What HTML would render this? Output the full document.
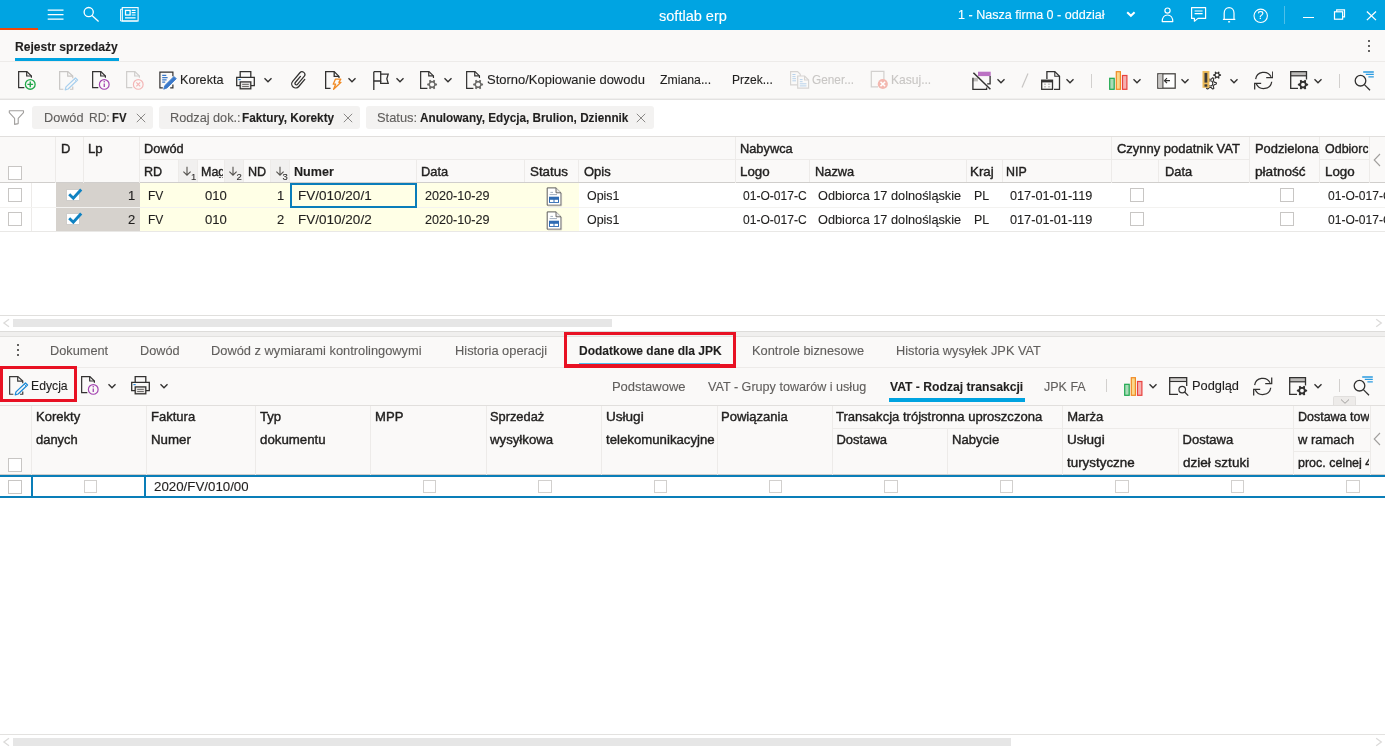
<!DOCTYPE html>
<html lang="pl"><head><meta charset="utf-8"><title>Rejestr sprzedaży - softlab erp</title>
<style>
html,body{margin:0;padding:0;}
body{width:1385px;height:750px;overflow:hidden;background:#fff;position:relative;font-family:"Liberation Sans",sans-serif;color:#201f1e;}
#app{position:absolute;left:0;top:0;width:1385px;height:750px;overflow:hidden;will-change:transform;}
#app>div,#app>svg,#app>span{position:absolute;display:block;}
#app>span{white-space:pre;line-height:1;transform-origin:0 0;-webkit-text-stroke:0.12px;}
.cb{box-sizing:border-box;border:1px solid #c8c6c4;background:#fff;}
</style></head><body><div id="app">
<div style="left:0px;top:0px;width:1385px;height:30px;background:#00a4e2;"></div>
<div style="left:0px;top:28px;width:38px;height:2px;background:#f0480a;"></div>
<span style="left:658.63px;top:8.75px;font-size:14px;color:#fff;transform:scaleX(1.0380);">softlab erp</span>
<span style="left:957.99px;top:7.90px;font-size:13px;color:#fff;transform:scaleX(0.9660);">1 - Nasza firma 0 - oddział</span>
<div style="left:0px;top:30px;width:1385px;height:31px;background:#faf9f8;"></div>
<div style="left:0px;top:61px;width:1385px;height:1px;background:#edebe9;"></div>
<span style="left:15.44px;top:40.64px;font-size:12px;font-weight:700;transform:scaleX(1.0072);">Rejestr sprzedaży</span>
<div style="left:15px;top:58px;width:104px;height:3px;background:#00a3e0;"></div>
<div style="left:1368px;top:40.3px;width:2px;height:2px;background:#323130;border-radius:1px;"></div>
<div style="left:1368px;top:45.2px;width:2px;height:2px;background:#323130;border-radius:1px;"></div>
<div style="left:1368px;top:50.0px;width:2px;height:2px;background:#323130;border-radius:1px;"></div>
<div style="left:0px;top:62px;width:1385px;height:36px;background:#faf9f8;"></div>
<div style="left:0px;top:98px;width:1385px;height:1px;background:#f0efee;"></div>
<div style="left:0px;top:99px;width:1385px;height:1px;background:#e3e2e1;"></div>
<span style="left:179.59px;top:72.80px;font-size:13px;transform:scaleX(0.9700);">Korekta</span>
<span style="left:486.99px;top:72.80px;font-size:13px;transform:scaleX(0.9974);">Storno/Kopiowanie dowodu</span>
<span style="left:659.58px;top:72.80px;font-size:13px;transform:scaleX(0.9443);">Zmiana...</span>
<span style="left:732.18px;top:72.80px;font-size:13px;transform:scaleX(0.9249);">Przek...</span>
<span style="left:811.78px;top:72.80px;font-size:13px;color:#c8c6c4;transform:scaleX(0.9096);">Gener...</span>
<span style="left:891.28px;top:72.80px;font-size:13px;color:#c8c6c4;transform:scaleX(0.9264);">Kasuj...</span>
<div style="left:0px;top:100px;width:1385px;height:36px;background:#fff;"></div>
<div style="left:32.2px;top:106px;width:121.3px;height:23px;background:#f3f2f1;border-radius:3px;"></div>
<div style="left:159.2px;top:106px;width:201px;height:23px;background:#f3f2f1;border-radius:3px;"></div>
<div style="left:366.2px;top:106px;width:288px;height:23px;background:#f3f2f1;border-radius:3px;"></div>
<span style="left:43.58px;top:110.80px;font-size:13px;color:#605e5c;transform:scaleX(0.9753);">Dowód</span>
<span style="left:88.98px;top:110.80px;font-size:13px;color:#605e5c;transform:scaleX(0.9232);">RD:</span>
<span style="left:112.28px;top:110.80px;font-size:13px;font-weight:700;transform:scaleX(0.8764);">FV</span>
<span style="left:169.88px;top:110.80px;font-size:13px;color:#605e5c;transform:scaleX(0.9765);">Rodzaj dok.:</span>
<span style="left:241.88px;top:110.80px;font-size:13px;font-weight:700;transform:scaleX(0.9068);">Faktury, Korekty</span>
<span style="left:376.59px;top:110.80px;font-size:13px;color:#605e5c;transform:scaleX(0.9901);">Status:</span>
<span style="left:419.59px;top:110.80px;font-size:13px;font-weight:700;transform:scaleX(0.9024);">Anulowany, Edycja, Brulion, Dziennik</span>
<svg style="left:135.2px;top:111.6px;" width="12" height="12" viewBox="0 0 12 12" fill="none"><path d="M1.7999999999999998 1.7999999999999998L10.2 10.2M10.2 1.7999999999999998L1.7999999999999998 10.2" stroke="#8a8886" stroke-width="1"/></svg>
<svg style="left:341.7px;top:111.6px;" width="12" height="12" viewBox="0 0 12 12" fill="none"><path d="M1.7999999999999998 1.7999999999999998L10.2 10.2M10.2 1.7999999999999998L1.7999999999999998 10.2" stroke="#8a8886" stroke-width="1"/></svg>
<svg style="left:635.4px;top:111.6px;" width="12" height="12" viewBox="0 0 12 12" fill="none"><path d="M1.7999999999999998 1.7999999999999998L10.2 10.2M10.2 1.7999999999999998L1.7999999999999998 10.2" stroke="#8a8886" stroke-width="1"/></svg>
<div style="left:0px;top:136px;width:1385px;height:1px;background:#e1dfdd;"></div>
<div style="left:0px;top:137px;width:1370px;height:46px;background:#faf9f8;"></div>
<div style="left:1370px;top:137px;width:15px;height:46px;background:#faf9f8;"></div>
<div style="left:178px;top:159.8px;width:19.2px;height:22.4px;background:#f1f0ef;"></div>
<div style="left:224.3px;top:159.8px;width:19.4px;height:22.4px;background:#f1f0ef;"></div>
<div style="left:270.4px;top:159.8px;width:18.8px;height:22.4px;background:#f1f0ef;"></div>
<div style="left:140px;top:158.8px;width:1110px;height:1px;background:#edebe9;"></div>
<div style="left:1320px;top:158.8px;width:50px;height:1px;background:#edebe9;"></div>
<div style="left:0px;top:182px;width:1385px;height:1.3px;background:#d0cecc;"></div>
<div style="left:55.3px;top:137px;width:1px;height:46px;background:#edebe9;"></div>
<div style="left:83.3px;top:137px;width:1px;height:46px;background:#edebe9;"></div>
<div style="left:139.3px;top:137px;width:1px;height:46px;background:#edebe9;"></div>
<div style="left:734.5px;top:137px;width:1px;height:46px;background:#edebe9;"></div>
<div style="left:1111.3px;top:137px;width:1px;height:46px;background:#edebe9;"></div>
<div style="left:1249.3px;top:137px;width:1px;height:46px;background:#edebe9;"></div>
<div style="left:1319px;top:137px;width:1px;height:46px;background:#edebe9;"></div>
<div style="left:1369.3px;top:137px;width:1px;height:46px;background:#edebe9;"></div>
<div style="left:177.7px;top:159.5px;width:1px;height:22.6px;background:#edebe9;"></div>
<div style="left:196.9px;top:159.5px;width:1px;height:22.6px;background:#edebe9;"></div>
<div style="left:224px;top:159.5px;width:1px;height:22.6px;background:#edebe9;"></div>
<div style="left:243.4px;top:159.5px;width:1px;height:22.6px;background:#edebe9;"></div>
<div style="left:270.1px;top:159.5px;width:1px;height:22.6px;background:#edebe9;"></div>
<div style="left:288.9px;top:159.5px;width:1px;height:22.6px;background:#edebe9;"></div>
<div style="left:415.8px;top:159.5px;width:1px;height:22.6px;background:#edebe9;"></div>
<div style="left:524.2px;top:159.5px;width:1px;height:22.6px;background:#edebe9;"></div>
<div style="left:578.3px;top:159.5px;width:1px;height:22.6px;background:#edebe9;"></div>
<div style="left:809.3px;top:159.5px;width:1px;height:22.6px;background:#edebe9;"></div>
<div style="left:966.3px;top:159.5px;width:1px;height:22.6px;background:#edebe9;"></div>
<div style="left:1002.2px;top:159.5px;width:1px;height:22.6px;background:#edebe9;"></div>
<div style="left:1157.5px;top:159.5px;width:1px;height:22.6px;background:#edebe9;"></div>
<div style="left:0px;top:183.3px;width:1385px;height:23.3px;background:#fff;"></div>
<div style="left:56px;top:183.3px;width:84px;height:23.3px;background:#d6d2cd;"></div>
<div style="left:140px;top:183.3px;width:438.9px;height:23.3px;background:#ffffe6;"></div>
<div style="left:30.5px;top:183.3px;width:1px;height:23.3px;background:#edebe9;"></div>
<div style="left:0px;top:208.0px;width:1385px;height:23.1px;background:#fff;"></div>
<div style="left:56px;top:208.0px;width:84px;height:23.1px;background:#d6d2cd;"></div>
<div style="left:140px;top:208.0px;width:438.9px;height:23.1px;background:#ffffe6;"></div>
<div style="left:30.5px;top:208.0px;width:1px;height:23.1px;background:#edebe9;"></div>
<div style="left:0px;top:206.6px;width:1385px;height:1.4px;background:#f3f2f0;"></div>
<div style="left:0px;top:231.1px;width:1385px;height:1.2px;background:#e9e8e6;"></div>
<div class="cb" style="left:8px;top:188px;width:14px;height:14px;"></div>
<div class="cb" style="left:66.3px;top:188.8px;width:13.4px;height:12.6px;border-color:#cfcdca;"></div>
<svg style="left:66px;top:186px;" width="18" height="18" viewBox="0 0 18 18" fill="none"><path d="M3.2 8.3L7.3 12.2L15.2 3.5" stroke="#0f82c2" stroke-width="2.9"/></svg>
<span style="left:128.09px;top:188.80px;font-size:13px;">1</span>
<span style="left:147.59px;top:188.80px;font-size:13px;transform:scaleX(0.9245);">FV</span>
<span style="left:204.88px;top:188.80px;font-size:13px;transform:scaleX(1.0077);">010</span>
<span style="left:276.89px;top:188.80px;font-size:13px;">1</span>
<span style="left:297.89px;top:188.80px;font-size:13px;transform:scaleX(1.0401);">FV/010/20/1</span>
<span style="left:424.79px;top:188.80px;font-size:13px;transform:scaleX(0.9710);">2020-10-29</span>
<span style="left:586.99px;top:188.80px;font-size:13px;transform:scaleX(0.9559);">Opis1</span>
<span style="left:743.08px;top:188.80px;font-size:13px;transform:scaleX(0.9276);">01-O-017-C</span>
<span style="left:817.88px;top:188.80px;font-size:13px;transform:scaleX(0.9807);">Odbiorca 17 dolnośląskie</span>
<span style="left:973.68px;top:188.80px;font-size:13px;transform:scaleX(0.9537);">PL</span>
<span style="left:1010.49px;top:188.80px;font-size:13px;transform:scaleX(0.9768);">017-01-01-119</span>
<div class="cb" style="left:1130px;top:188px;width:14px;height:14px;"></div>
<div class="cb" style="left:1280px;top:188px;width:14px;height:14px;"></div>
<span style="left:1328.09px;top:188.80px;font-size:13px;transform:scaleX(0.9276);">01-O-017-C</span>
<div class="cb" style="left:8px;top:212px;width:14px;height:14px;"></div>
<div class="cb" style="left:66.3px;top:212.8px;width:13.4px;height:12.6px;border-color:#cfcdca;"></div>
<svg style="left:66px;top:210px;" width="18" height="18" viewBox="0 0 18 18" fill="none"><path d="M3.2 8.3L7.3 12.2L15.2 3.5" stroke="#0f82c2" stroke-width="2.9"/></svg>
<span style="left:128.09px;top:212.80px;font-size:13px;">2</span>
<span style="left:147.59px;top:212.80px;font-size:13px;transform:scaleX(0.9245);">FV</span>
<span style="left:204.88px;top:212.80px;font-size:13px;transform:scaleX(1.0077);">010</span>
<span style="left:276.89px;top:212.80px;font-size:13px;">2</span>
<span style="left:297.89px;top:212.80px;font-size:13px;transform:scaleX(1.0401);">FV/010/20/2</span>
<span style="left:424.79px;top:212.80px;font-size:13px;transform:scaleX(0.9710);">2020-10-29</span>
<span style="left:586.99px;top:212.80px;font-size:13px;transform:scaleX(0.9559);">Opis1</span>
<span style="left:743.08px;top:212.80px;font-size:13px;transform:scaleX(0.9276);">01-O-017-C</span>
<span style="left:817.88px;top:212.80px;font-size:13px;transform:scaleX(0.9807);">Odbiorca 17 dolnośląskie</span>
<span style="left:973.68px;top:212.80px;font-size:13px;transform:scaleX(0.9537);">PL</span>
<span style="left:1010.49px;top:212.80px;font-size:13px;transform:scaleX(0.9768);">017-01-01-119</span>
<div class="cb" style="left:1130px;top:212px;width:14px;height:14px;"></div>
<div class="cb" style="left:1280px;top:212px;width:14px;height:14px;"></div>
<span style="left:1328.09px;top:212.80px;font-size:13px;transform:scaleX(0.9276);">01-O-017-C</span>
<div style="left:290px;top:183.4px;width:126.8px;height:2px;background:#0a7dba;"></div>
<div style="left:290px;top:205.6px;width:126.8px;height:2px;background:#0a7dba;"></div>
<div style="left:290px;top:183.4px;width:2px;height:24.2px;background:#0a7dba;"></div>
<div style="left:414.8px;top:183.4px;width:2px;height:24.2px;background:#0a7dba;"></div>
<div class="cb" style="left:8px;top:166px;width:14px;height:14px;"></div>
<span style="left:61.08px;top:141.60px;font-size:13px;-webkit-text-stroke:0.4px;transform:scaleX(0.9978);">D</span>
<span style="left:88.48px;top:141.60px;font-size:13px;-webkit-text-stroke:0.4px;transform:scaleX(1.0139);">Lp</span>
<span style="left:144.48px;top:141.60px;font-size:13px;-webkit-text-stroke:0.4px;transform:scaleX(0.9803);">Dowód</span>
<span style="left:740.28px;top:141.60px;font-size:13px;-webkit-text-stroke:0.4px;transform:scaleX(0.9851);">Nabywca</span>
<span style="left:1116.88px;top:141.60px;font-size:13px;-webkit-text-stroke:0.4px;">Czynny podatnik VAT</span>
<span style="left:1255.49px;top:141.60px;font-size:13px;-webkit-text-stroke:0.4px;transform:scaleX(0.9913);">Podzielona</span>
<span style="left:1324.59px;top:141.60px;font-size:13px;-webkit-text-stroke:0.4px;transform:scaleX(0.9600);width:45.42px;overflow:hidden;">Odbiorca</span>
<span style="left:144.48px;top:164.80px;font-size:13px;-webkit-text-stroke:0.4px;transform:scaleX(0.9675);">RD</span>
<span style="left:201.48px;top:164.80px;font-size:13px;-webkit-text-stroke:0.4px;transform:scaleX(0.9600);width:22.81px;overflow:hidden;">Mag</span>
<span style="left:247.98px;top:164.80px;font-size:13px;-webkit-text-stroke:0.4px;transform:scaleX(0.9675);">ND</span>
<span style="left:293.89px;top:164.80px;font-size:13px;font-weight:700;transform:scaleX(0.9680);">Numer</span>
<span style="left:421.29px;top:164.80px;font-size:13px;-webkit-text-stroke:0.4px;transform:scaleX(0.9891);">Data</span>
<span style="left:529.88px;top:164.80px;font-size:13px;-webkit-text-stroke:0.4px;transform:scaleX(1.0274);">Status</span>
<span style="left:583.58px;top:164.80px;font-size:13px;-webkit-text-stroke:0.4px;transform:scaleX(0.9976);">Opis</span>
<span style="left:740.28px;top:164.80px;font-size:13px;-webkit-text-stroke:0.4px;transform:scaleX(1.0259);">Logo</span>
<span style="left:814.99px;top:164.80px;font-size:13px;-webkit-text-stroke:0.4px;transform:scaleX(0.9854);">Nazwa</span>
<span style="left:970.28px;top:164.80px;font-size:13px;-webkit-text-stroke:0.4px;transform:scaleX(1.0236);">Kraj</span>
<span style="left:1006.28px;top:164.80px;font-size:13px;-webkit-text-stroke:0.4px;transform:scaleX(0.9538);">NIP</span>
<span style="left:1164.69px;top:164.80px;font-size:13px;-webkit-text-stroke:0.4px;transform:scaleX(0.9891);">Data</span>
<span style="left:1255.49px;top:164.80px;font-size:13px;-webkit-text-stroke:0.4px;transform:scaleX(1.0464);">płatność</span>
<span style="left:1324.59px;top:164.80px;font-size:13px;-webkit-text-stroke:0.4px;transform:scaleX(1.0259);">Logo</span>
<div style="left:0px;top:315px;width:1385px;height:1px;background:#e0dfdd;"></div>
<div style="left:13px;top:319.3px;width:598.7px;height:8px;background:#e6e6e6;"></div>
<div style="left:0px;top:331px;width:1385px;height:5.5px;background:#f0efee;"></div>
<div style="left:0px;top:331px;width:1385px;height:1px;background:#dddcda;"></div>
<div style="left:0px;top:336px;width:1385px;height:1px;background:#e2e1df;"></div>
<div style="left:0px;top:337px;width:1385px;height:30px;background:#faf9f8;"></div>
<div style="left:0px;top:367px;width:1385px;height:1px;background:#edebe9;"></div>
<div style="left:16.5px;top:344px;width:2px;height:2px;background:#323130;border-radius:1px;"></div>
<div style="left:16.5px;top:348.8px;width:2px;height:2px;background:#323130;border-radius:1px;"></div>
<div style="left:16.5px;top:353.6px;width:2px;height:2px;background:#323130;border-radius:1px;"></div>
<span style="left:50.18px;top:344.40px;font-size:13px;color:#605e5c;transform:scaleX(0.9818);">Dokument</span>
<span style="left:140.09px;top:344.40px;font-size:13px;color:#605e5c;transform:scaleX(0.9778);">Dowód</span>
<span style="left:211.38px;top:344.40px;font-size:13px;color:#605e5c;transform:scaleX(0.9880);">Dowód z wymiarami kontrolingowymi</span>
<span style="left:454.79px;top:344.40px;font-size:13px;color:#605e5c;transform:scaleX(0.9878);">Historia operacji</span>
<span style="left:578.58px;top:344.40px;font-size:13px;font-weight:700;transform:scaleX(0.9229);">Dodatkowe dane dla JPK</span>
<span style="left:751.68px;top:344.40px;font-size:13px;color:#605e5c;transform:scaleX(0.9877);">Kontrole biznesowe</span>
<span style="left:896.38px;top:344.40px;font-size:13px;color:#605e5c;transform:scaleX(0.9814);">Historia wysyłek JPK VAT</span>
<div style="left:579px;top:363px;width:141px;height:2px;background:#4fc0ee;"></div>
<div style="left:563.9px;top:332.1px;width:172.5px;height:3.4px;background:#e81123;"></div>
<div style="left:563.9px;top:364.40000000000003px;width:172.5px;height:3.4px;background:#e81123;"></div>
<div style="left:563.9px;top:332.1px;width:3.4px;height:35.7px;background:#e81123;"></div>
<div style="left:733.0px;top:332.1px;width:3.4px;height:35.7px;background:#e81123;"></div>
<div style="left:0px;top:368px;width:1385px;height:37px;background:#faf9f8;"></div>
<span style="left:30.98px;top:378.80px;font-size:13px;transform:scaleX(0.9395);">Edycja</span>
<div style="left:-0.4px;top:365.8px;width:77.4px;height:3.3px;background:#e81123;"></div>
<div style="left:-0.4px;top:398.8px;width:77.4px;height:3.3px;background:#e81123;"></div>
<div style="left:-0.4px;top:365.8px;width:3.3px;height:36.3px;background:#e81123;"></div>
<div style="left:73.7px;top:365.8px;width:3.3px;height:36.3px;background:#e81123;"></div>
<span style="left:611.88px;top:380.40px;font-size:13px;color:#605e5c;">Podstawowe</span>
<span style="left:708.28px;top:380.40px;font-size:13px;color:#605e5c;transform:scaleX(0.9687);">VAT - Grupy towarów i usług</span>
<span style="left:890.28px;top:380.40px;font-size:13px;font-weight:700;transform:scaleX(0.9341);">VAT - Rodzaj transakcji</span>
<div style="left:889.2px;top:398px;width:135.8px;height:3.5px;background:#00a3e0;"></div>
<span style="left:1044.29px;top:380.40px;font-size:13px;color:#605e5c;transform:scaleX(0.9610);">JPK FA</span>
<span style="left:1191.79px;top:379.30px;font-size:13px;transform:scaleX(0.9843);">Podgląd</span>
<div style="left:1106px;top:379.4px;width:1px;height:13px;background:#d2d0ce;"></div>
<div style="left:1339px;top:379.4px;width:1px;height:13px;background:#d2d0ce;"></div>
<div style="left:0px;top:405px;width:1385px;height:1px;background:#e1dfdd;"></div>
<div style="left:0px;top:406px;width:1385px;height:68.5px;background:#faf9f8;"></div>
<div style="left:0px;top:474px;width:1385px;height:1px;background:#d0cecc;"></div>
<div style="left:31px;top:406px;width:1px;height:68.5px;background:#edebe9;"></div>
<div style="left:146px;top:406px;width:1px;height:68.5px;background:#edebe9;"></div>
<div style="left:255px;top:406px;width:1px;height:68.5px;background:#edebe9;"></div>
<div style="left:370px;top:406px;width:1px;height:68.5px;background:#edebe9;"></div>
<div style="left:486px;top:406px;width:1px;height:68.5px;background:#edebe9;"></div>
<div style="left:601px;top:406px;width:1px;height:68.5px;background:#edebe9;"></div>
<div style="left:717px;top:406px;width:1px;height:68.5px;background:#edebe9;"></div>
<div style="left:832px;top:406px;width:1px;height:68.5px;background:#edebe9;"></div>
<div style="left:947px;top:428px;width:1px;height:46px;background:#edebe9;"></div>
<div style="left:1062px;top:406px;width:1px;height:68.5px;background:#edebe9;"></div>
<div style="left:1178px;top:428px;width:1px;height:46px;background:#edebe9;"></div>
<div style="left:1293px;top:406px;width:1px;height:68.5px;background:#edebe9;"></div>
<div style="left:1370px;top:406px;width:1px;height:68.5px;background:#edebe9;"></div>
<div style="left:832px;top:428px;width:230px;height:1px;background:#edebe9;"></div>
<div style="left:1062px;top:428px;width:308px;height:1px;background:#edebe9;"></div>
<div style="left:1293px;top:451px;width:77px;height:1px;background:#edebe9;"></div>
<span style="left:35.58px;top:410.00px;font-size:13px;-webkit-text-stroke:0.4px;transform:scaleX(1.0021);">Korekty</span>
<span style="left:35.58px;top:433.20px;font-size:13px;-webkit-text-stroke:0.4px;transform:scaleX(0.9964);">danych</span>
<span style="left:150.98px;top:410.00px;font-size:13px;-webkit-text-stroke:0.4px;transform:scaleX(1.0021);">Faktura</span>
<span style="left:150.98px;top:433.20px;font-size:13px;-webkit-text-stroke:0.4px;transform:scaleX(1.0219);">Numer</span>
<span style="left:259.59px;top:410.00px;font-size:13px;-webkit-text-stroke:0.4px;transform:scaleX(1.0096);">Typ</span>
<span style="left:259.59px;top:433.20px;font-size:13px;-webkit-text-stroke:0.4px;transform:scaleX(1.0209);">dokumentu</span>
<span style="left:374.99px;top:410.00px;font-size:13px;-webkit-text-stroke:0.4px;transform:scaleX(1.0070);">MPP</span>
<span style="left:490.19px;top:410.00px;font-size:13px;-webkit-text-stroke:0.4px;transform:scaleX(0.9863);">Sprzedaż</span>
<span style="left:490.19px;top:433.20px;font-size:13px;-webkit-text-stroke:0.4px;transform:scaleX(1.0168);">wysyłkowa</span>
<span style="left:605.58px;top:410.00px;font-size:13px;-webkit-text-stroke:0.4px;transform:scaleX(1.0428);">Usługi</span>
<span style="left:605.58px;top:433.20px;font-size:13px;-webkit-text-stroke:0.4px;transform:scaleX(1.0161);">telekomunikacyjne</span>
<span style="left:720.99px;top:410.00px;font-size:13px;-webkit-text-stroke:0.4px;transform:scaleX(1.0026);">Powiązania</span>
<span style="left:836.49px;top:410.00px;font-size:13px;-webkit-text-stroke:0.4px;transform:scaleX(1.0035);">Transakcja trójstronna uproszczona</span>
<span style="left:836.49px;top:433.20px;font-size:13px;-webkit-text-stroke:0.4px;">Dostawa</span>
<span style="left:951.78px;top:433.20px;font-size:13px;-webkit-text-stroke:0.4px;transform:scaleX(1.0043);">Nabycie</span>
<span style="left:1067.19px;top:410.00px;font-size:13px;-webkit-text-stroke:0.4px;">Marża</span>
<span style="left:1067.19px;top:433.20px;font-size:13px;-webkit-text-stroke:0.4px;transform:scaleX(1.0428);">Usługi</span>
<span style="left:1067.19px;top:456.00px;font-size:13px;-webkit-text-stroke:0.4px;transform:scaleX(1.0292);">turystyczne</span>
<span style="left:1182.59px;top:433.20px;font-size:13px;-webkit-text-stroke:0.4px;">Dostawa</span>
<span style="left:1182.59px;top:456.00px;font-size:13px;-webkit-text-stroke:0.4px;transform:scaleX(1.0408);">dzieł sztuki</span>
<span style="left:1297.99px;top:410.00px;font-size:13px;-webkit-text-stroke:0.4px;transform:scaleX(0.9600);width:73.96px;overflow:hidden;">Dostawa towarów</span>
<span style="left:1297.99px;top:433.20px;font-size:13px;-webkit-text-stroke:0.4px;transform:scaleX(0.9966);">w ramach</span>
<span style="left:1297.99px;top:456.00px;font-size:13px;-webkit-text-stroke:0.4px;transform:scaleX(0.9600);width:73.96px;overflow:hidden;">proc. celnej 42</span>
<div class="cb" style="left:8px;top:458px;width:14px;height:14px;"></div>
<div style="left:0px;top:477px;width:1385px;height:19px;background:#fff;"></div>
<div style="left:0px;top:475px;width:1385px;height:2.4px;background:#0a7eb8;"></div>
<div style="left:0px;top:495.8px;width:1385px;height:2.4px;background:#0a7eb8;"></div>
<div style="left:31.2px;top:475px;width:2.1px;height:23px;background:#0a7eb8;"></div>
<div style="left:144.2px;top:475px;width:2.1px;height:23px;background:#0a7eb8;"></div>
<div class="cb" style="left:8px;top:479.7px;width:14px;height:14px;"></div>
<div class="cb" style="left:83.6px;top:480px;width:13.4px;height:13.3px;border-color:#d2d0ce;"></div>
<div class="cb" style="left:422.9px;top:480px;width:13.4px;height:13.3px;border-color:#d2d0ce;"></div>
<div class="cb" style="left:538.3px;top:480px;width:13.4px;height:13.3px;border-color:#d2d0ce;"></div>
<div class="cb" style="left:653.6px;top:480px;width:13.4px;height:13.3px;border-color:#d2d0ce;"></div>
<div class="cb" style="left:768.9px;top:480px;width:13.4px;height:13.3px;border-color:#d2d0ce;"></div>
<div class="cb" style="left:884.3px;top:480px;width:13.4px;height:13.3px;border-color:#d2d0ce;"></div>
<div class="cb" style="left:999.7px;top:480px;width:13.4px;height:13.3px;border-color:#d2d0ce;"></div>
<div class="cb" style="left:1115.3px;top:480px;width:13.4px;height:13.3px;border-color:#d2d0ce;"></div>
<div class="cb" style="left:1230.8px;top:480px;width:13.4px;height:13.3px;border-color:#d2d0ce;"></div>
<div class="cb" style="left:1346.3px;top:480px;width:13.4px;height:13.3px;border-color:#d2d0ce;"></div>
<span style="left:154.38px;top:480.30px;font-size:13px;transform:scaleX(1.0232);width:92.16px;overflow:hidden;">2020/FV/010/0001</span>
<div style="left:0px;top:734px;width:1385px;height:1px;background:#e3e2e0;"></div>
<div style="left:13px;top:738.2px;width:998px;height:8px;background:#e6e6e6;"></div>
<svg style="left:18.0px;top:70.8px;" width="20" height="20" viewBox="0 0 20 20" fill="none"><path d="M6.3 16.6H0.65V0.65H8.9L13.4 5.0V6.7" stroke="#323130" stroke-width="1.2" stroke-linejoin="miter"/><path d="M8.7 0.65V5.0H13.4" stroke="#323130" stroke-width="1.2"/><circle cx="12.26" cy="13.4" r="4.85" stroke="#21a84a" stroke-width="1.3" fill="#faf9f8"/><path d="M9.4 13.4H15.1M12.26 10.55V16.25" stroke="#21a84a" stroke-width="1.4"/></svg>
<svg style="left:59.25px;top:70.9px;" width="22" height="22" viewBox="0 0 22 22" fill="none"><path d="M4.35 18.25H0.65V0.65H8.9L13.75 5.1V7.3" stroke="#c8c6c4" stroke-width="1.2"/><path d="M8.7 0.65V5.1H13.75" stroke="#c8c6c4" stroke-width="1.2"/><path d="M13.75 15.6V18.25H11.0" stroke="#c8c6c4" stroke-width="1.2"/><path d="M16.44 6.94L18.56 9.06L9.1 18.02L6.2 18.8L6.98 15.9Z" stroke="#a9d0ee" stroke-width="1.25" fill="#faf9f8" stroke-linejoin="round"/><path d="M15.2 8.2L17.3 10.3" stroke="#a9d0ee" stroke-width="0.9"/></svg>
<svg style="left:92.0px;top:70.8px;" width="20" height="20" viewBox="0 0 20 20" fill="none"><path d="M6.3 16.6H0.65V0.65H8.9L13.4 5.0V6.7" stroke="#323130" stroke-width="1.2" stroke-linejoin="miter"/><path d="M8.7 0.65V5.0H13.4" stroke="#323130" stroke-width="1.2"/><circle cx="12.26" cy="13.4" r="4.85" stroke="#a343b0" stroke-width="1.2" fill="#faf9f8"/><path d="M12.26 12.5V16.1" stroke="#a343b0" stroke-width="1.3"/><circle cx="12.26" cy="10.7" r="0.8" fill="#a343b0"/></svg>
<svg style="left:125.6px;top:70.8px;" width="20" height="20" viewBox="0 0 20 20" fill="none"><path d="M6.3 16.6H0.65V0.65H8.9L13.4 5.0V6.7" stroke="#cfcdcb" stroke-width="1.2" stroke-linejoin="miter"/><path d="M8.7 0.65V5.0H13.4" stroke="#cfcdcb" stroke-width="1.2"/><circle cx="12.26" cy="13.4" r="4.85" stroke="#f4b6b6" stroke-width="1.2" fill="#faf9f8"/><path d="M10.3 11.4L14.2 15.3M14.2 11.4L10.3 15.3" stroke="#f4b6b6" stroke-width="1.2"/></svg>
<svg style="left:158.5px;top:71.0px;" width="20" height="20" viewBox="0 0 20 20" fill="none"><path d="M3.8 16.9H0.9V1.1H13.9V5.2" stroke="#323130" stroke-width="1.2"/><path d="M13.9 13.5V16.9H11.2" stroke="#323130" stroke-width="1.2"/><path d="M3.2 4.3H7.3M3.2 6.6H8.6M3.2 8.9H7.6M3.2 11.2H6.2" stroke="#3a78c9" stroke-width="1.2"/><path d="M15 5.4L17.3 7.7L8 17L4.7 18.2L5.7 14.7Z" fill="#3a78c9" stroke="#3a78c9" stroke-width="0.8" stroke-linejoin="round"/></svg>
<svg style="left:235.5px;top:71.0px;" width="20" height="20" viewBox="0 0 20 20" fill="none"><path d="M4.2 6.3V0.7H14.8V6.3" stroke="#323130" stroke-width="1.3"/><path d="M4.2 14.7H0.7V6.3H18.3V14.7H14.8" stroke="#323130" stroke-width="1.3"/><rect x="4.2" y="10.9" width="10.6" height="6.9" fill="#e6e4e2" stroke="#323130" stroke-width="1.3"/><path d="M6.2 13.4H12.8M6.2 15.5H12.8" stroke="#605e5c" stroke-width="0.9"/><rect x="2.4" y="8" width="2.3" height="1.2" fill="#2b88d8"/></svg>
<svg style="left:262.1px;top:75.0px;" width="12" height="10" viewBox="0 0 12 10" fill="none"><path d="M2.5 3.25L6 6.75L9.5 3.25" stroke="#323130" stroke-width="1.35" stroke-linejoin="miter"/></svg>
<svg style="left:288.5px;top:70px;" width="20" height="20" viewBox="0 0 20 20" fill="none"><g transform="translate(10 10) rotate(40) scale(0.93)"><path d="M4.3 -4.5V5.5A4.3 4.3 0 0 1 -4.3 5.5V-6.6A3 3 0 0 1 1.7 -6.6V4.6A1.5 1.5 0 0 1 -1.3 4.6V-4" stroke="#323130" stroke-width="1.35" stroke-linecap="round"/></g></svg>
<svg style="left:324.6px;top:70.8px;" width="20" height="20" viewBox="0 0 20 20" fill="none"><path d="M5.5 17.35H0.65V0.65H9.2L14 5.4V7" stroke="#323130" stroke-width="1.3"/><path d="M9.2 0.65V5.4H14" stroke="#323130" stroke-width="1.3"/><path d="M10.4 8.2H15.8L13.8 11.3H16L8.6 18.2L10.6 13.2H8.2Z" stroke="#f08a24" stroke-width="1.3" stroke-linejoin="round" fill="#faf9f8"/></svg>
<svg style="left:345.8px;top:75.0px;" width="12" height="10" viewBox="0 0 12 10" fill="none"><path d="M2.5 3.25L6 6.75L9.5 3.25" stroke="#323130" stroke-width="1.35" stroke-linejoin="miter"/></svg>
<svg style="left:372.5px;top:70.8px;" width="20" height="20" viewBox="0 0 20 20" fill="none"><path d="M0.8 0.65V18.9" stroke="#323130" stroke-width="1.3"/><path d="M0.8 0.65H7.7V10.0H0.8" stroke="#323130" stroke-width="1.3"/><path d="M7.7 3.1H15.2L13.8 7.75L15.2 12.4H7.7V10.0" stroke="#323130" stroke-width="1.3" stroke-linejoin="miter"/></svg>
<svg style="left:394.2px;top:75.0px;" width="12" height="10" viewBox="0 0 12 10" fill="none"><path d="M2.5 3.25L6 6.75L9.5 3.25" stroke="#323130" stroke-width="1.35" stroke-linejoin="miter"/></svg>
<svg style="left:419.9px;top:70.8px;" width="20" height="20" viewBox="0 0 20 20" fill="none"><path d="M7.4 17.45H0.65V0.65H8.95L13.45 4.9V6.9" stroke="#323130" stroke-width="1.2"/><path d="M8.75 0.65V4.9H13.45" stroke="#323130" stroke-width="1.2"/><path d="M15.35 12.21L17.05 12.82L17.05 14.18L15.35 14.79L14.84 15.67L15.16 17.45L13.99 18.13L12.61 16.96L11.59 16.96L10.21 18.13L9.04 17.45L9.36 15.67L8.85 14.79L7.15 14.18L7.15 12.82L8.85 12.21L9.36 11.33L9.04 9.55L10.21 8.87L11.59 10.04L12.61 10.04L13.99 8.87L15.16 9.55L14.84 11.33ZM10.00 13.50A2.1 2.1 0 1 0 14.20 13.50A2.1 2.1 0 1 0 10.00 13.50Z" fill="#6b6a68" fill-rule="evenodd"/></svg>
<svg style="left:442.3px;top:75.0px;" width="12" height="10" viewBox="0 0 12 10" fill="none"><path d="M2.5 3.25L6 6.75L9.5 3.25" stroke="#323130" stroke-width="1.35" stroke-linejoin="miter"/></svg>
<svg style="left:465.9px;top:70.8px;" width="20" height="20" viewBox="0 0 20 20" fill="none"><path d="M7.4 17.45H0.65V0.65H8.95L13.45 4.9V6.9" stroke="#323130" stroke-width="1.2"/><path d="M8.75 0.65V4.9H13.45" stroke="#323130" stroke-width="1.2"/><path d="M15.35 12.21L17.05 12.82L17.05 14.18L15.35 14.79L14.84 15.67L15.16 17.45L13.99 18.13L12.61 16.96L11.59 16.96L10.21 18.13L9.04 17.45L9.36 15.67L8.85 14.79L7.15 14.18L7.15 12.82L8.85 12.21L9.36 11.33L9.04 9.55L10.21 8.87L11.59 10.04L12.61 10.04L13.99 8.87L15.16 9.55L14.84 11.33ZM10.00 13.50A2.1 2.1 0 1 0 14.20 13.50A2.1 2.1 0 1 0 10.00 13.50Z" fill="#6b6a68" fill-rule="evenodd"/></svg>
<svg style="left:789.9px;top:71.2px;" width="20" height="20" viewBox="0 0 20 20" fill="none"><path d="M7.4 13.9H0.6V0.6H7.6L10.3 3.3V5" stroke="#d6d4d2" stroke-width="1.1" fill="#faf9f8"/><path d="M2.4 3.5H5.5M2.4 5.6H5.5M2.4 7.7H6M2.4 9.8H6" stroke="#b9d3ec" stroke-width="1"/><path d="M7.7 5.0H14.6L18.6 9.0V17.2H7.7Z" stroke="#d6d4d2" stroke-width="1.2" fill="#faf9f8"/><path d="M14.6 5.0V9.0H18.6" stroke="#d6d4d2" stroke-width="1.1"/><path d="M9.8 8.6H12.6M9.8 10.7H12.6M9.8 12.8H16.5M9.8 14.9H16.5" stroke="#b9d3ec" stroke-width="1"/></svg>
<svg style="left:870.4px;top:70.4px;" width="20" height="20" viewBox="0 0 20 20" fill="none"><path d="M8 16.9H1.3V1.4H13.9V9.5" stroke="#d2d0ce" stroke-width="1.2"/><circle cx="12.8" cy="14.0" r="5.1" fill="#f3b8b0"/><path d="M10.5 11.7L15.1 16.3M15.1 11.7L10.5 16.3" stroke="#fff" stroke-width="1.6"/></svg>
<svg style="left:972.1px;top:71.2px;" width="20" height="20" viewBox="0 0 20 20" fill="none"><rect x="6" y="0.7" width="12.7" height="4.4" fill="#bb72c3"/><path d="M18.1 5V12.8H15.2" stroke="#323130" stroke-width="1.3"/><rect x="0.9" y="6.8" width="5" height="3.6" fill="#bdbbb9"/><path d="M0.9 6.8V18.4H14.6V16.5" stroke="#323130" stroke-width="1.3"/><path d="M1.4 1.7L18.4 18.3" stroke="#323130" stroke-width="1.5"/></svg>
<svg style="left:994.6px;top:75.8px;" width="12" height="10" viewBox="0 0 12 10" fill="none"><path d="M2.5 3.25L6 6.75L9.5 3.25" stroke="#323130" stroke-width="1.35" stroke-linejoin="miter"/></svg>
<svg style="left:1020px;top:72px;" width="10" height="17" viewBox="0 0 10 17" fill="none"><path d="M8 1.4L2 15.5" stroke="#c8c6c4" stroke-width="1.2"/></svg>
<svg style="left:1040.9px;top:71.1px;" width="20" height="20" viewBox="0 0 20 20" fill="none"><path d="M5.9 8V0.65H13.8L18.5 5.3V18.3H13" stroke="#323130" stroke-width="1.3"/><path d="M13.8 0.65V5.3H18.5" stroke="#323130" stroke-width="1.1"/><rect x="0.7" y="9.2" width="10.8" height="9.1" fill="#faf9f8" stroke="#323130" stroke-width="1.3"/><path d="M0.7 10.3H11.5" stroke="#323130" stroke-width="2.2"/><path d="M3 13.2H5M7 13.2H9.3M3 15.8H5M7 15.8H9.3" stroke="#c8c6c4" stroke-width="1.4"/></svg>
<svg style="left:1063.6px;top:75.8px;" width="12" height="10" viewBox="0 0 12 10" fill="none"><path d="M2.5 3.25L6 6.75L9.5 3.25" stroke="#323130" stroke-width="1.35" stroke-linejoin="miter"/></svg>
<div style="left:1091px;top:74px;width:1px;height:14px;background:#d2d0ce;"></div>
<svg style="left:1108.5px;top:70.8px;" width="20" height="20" viewBox="0 0 20 20" fill="none"><rect x="0.7" y="7.3" width="4.5" height="11" fill="#a9dcb8" stroke="#1fa84f" stroke-width="1.2"/><rect x="7.3" y="0.7" width="4.1" height="17.6" fill="#fbd78a" stroke="#f08a24" stroke-width="1.2"/><rect x="13.5" y="4.5" width="4.4" height="13.8" fill="#f6b1b0" stroke="#e8433f" stroke-width="1.2"/></svg>
<svg style="left:1131.2px;top:75.8px;" width="12" height="10" viewBox="0 0 12 10" fill="none"><path d="M2.5 3.25L6 6.75L9.5 3.25" stroke="#323130" stroke-width="1.35" stroke-linejoin="miter"/></svg>
<svg style="left:1156.5px;top:73.2px;" width="20" height="18" viewBox="0 0 20 18" fill="none"><rect x="0.8" y="0.8" width="17.4" height="14.4" fill="#fff" stroke="#484644" stroke-width="1.3"/><rect x="1.4" y="1.4" width="4.2" height="13.2" fill="#c8c6c4"/><path d="M5.9 0.8V15.2" stroke="#484644" stroke-width="1.1"/><path d="M13 7.7H7.6M10 5.2L7.5 7.7L10 10.2" stroke="#323130" stroke-width="1.2"/></svg>
<svg style="left:1179.4px;top:75.8px;" width="12" height="10" viewBox="0 0 12 10" fill="none"><path d="M2.5 3.25L6 6.75L9.5 3.25" stroke="#323130" stroke-width="1.35" stroke-linejoin="miter"/></svg>
<svg style="left:1201.6px;top:71px;" width="20" height="20" viewBox="0 0 20 20" fill="none"><path d="M12.19 11.10L14.37 11.75L14.37 13.05L12.19 13.70L11.32 15.21L11.84 17.42L10.72 18.06L9.07 16.51L7.33 16.51L5.68 18.06L4.56 17.42L5.08 15.21L4.21 13.70L2.03 13.05L2.03 11.75L4.21 11.10L5.08 9.59L4.56 7.38L5.68 6.74L7.33 8.29L9.07 8.29L10.72 6.74L11.84 7.38L11.32 9.59Z" fill="#fff" stroke="#323130" stroke-width="1.1" stroke-linejoin="round"/><circle cx="8.2" cy="12.4" r="2.6" fill="none" stroke="#323130" stroke-width="1.1"/><circle cx="15.1" cy="4.1" r="2.7" fill="#fff"/><path d="M17.61 3.11L19.06 3.56L19.06 4.64L17.61 5.09L17.22 5.78L17.55 7.26L16.61 7.80L15.49 6.77L14.71 6.77L13.59 7.80L12.65 7.26L12.98 5.78L12.59 5.09L11.14 4.64L11.14 3.56L12.59 3.11L12.98 2.42L12.65 0.94L13.59 0.40L14.71 1.43L15.49 1.43L16.61 0.40L17.55 0.94L17.22 2.42ZM13.60 4.10A1.5 1.5 0 1 0 16.60 4.10A1.5 1.5 0 1 0 13.60 4.10Z" fill="#323130" fill-rule="evenodd"/><rect x="0.5" y="0" width="6.9" height="16.8" fill="#ebba5a"/><rect x="2.5" y="1.9" width="2.8" height="9.7" fill="#3b3a39"/><rect x="2.5" y="13.3" width="2.8" height="2.4" fill="#3b3a39"/></svg>
<svg style="left:1228.1px;top:75.8px;" width="12" height="10" viewBox="0 0 12 10" fill="none"><path d="M2.5 3.25L6 6.75L9.5 3.25" stroke="#323130" stroke-width="1.35" stroke-linejoin="miter"/></svg>
<svg style="left:1253.6px;top:71.1px;" width="19.4" height="18.9" viewBox="0 0 20 20" preserveAspectRatio="none" fill="none"><path d="M1.7 8.6A8.4 8.4 0 0 1 17.6 6.2" stroke="#323130" stroke-width="1.3"/><path d="M18.3 11.4A8.4 8.4 0 0 1 2.4 13.8" stroke="#323130" stroke-width="1.3"/><path d="M19.3 0.4V6.9H12.6" stroke="#323130" stroke-width="1.3"/><path d="M0.7 19.6V13.1H7.4" stroke="#323130" stroke-width="1.3"/></svg>
<svg style="left:1289.6px;top:70.6px;" width="20" height="20" viewBox="0 0 20 20" fill="none"><rect x="0.7" y="0.7" width="15.8" height="4" fill="#bdbbb9"/><path d="M8 17.3H0.7V0.7H16.5V8.5" stroke="#323130" stroke-width="1.3"/><path d="M0.7 4.8H16.5" stroke="#323130" stroke-width="1.2"/><path d="M16.44 12.24L18.15 12.89L18.15 14.31L16.44 14.96L15.90 15.90L16.19 17.71L14.96 18.41L13.54 17.26L12.46 17.26L11.04 18.41L9.81 17.71L10.10 15.90L9.56 14.96L7.85 14.31L7.85 12.89L9.56 12.24L10.10 11.30L9.81 9.49L11.04 8.79L12.46 9.94L13.54 9.94L14.96 8.79L16.19 9.49L15.90 11.30ZM11.10 13.60A1.9 1.9 0 1 0 14.90 13.60A1.9 1.9 0 1 0 11.10 13.60Z" fill="#323130" fill-rule="evenodd"/></svg>
<svg style="left:1311.6px;top:75.8px;" width="12" height="10" viewBox="0 0 12 10" fill="none"><path d="M2.5 3.25L6 6.75L9.5 3.25" stroke="#323130" stroke-width="1.35" stroke-linejoin="miter"/></svg>
<div style="left:1339px;top:74px;width:1px;height:14px;background:#d2d0ce;"></div>
<svg style="left:1353.9px;top:70.5px;" width="22" height="20" viewBox="0 0 22 20" fill="none"><circle cx="6.5" cy="9.7" r="5.3" stroke="#323130" stroke-width="1.3"/><path d="M10.4 13.6L16 19.2" stroke="#323130" stroke-width="1.3"/><path d="M9.2 1H19.8M11.8 3.4H19.8M14.4 5.8H19.8" stroke="#2b9be0" stroke-width="1.3"/></svg>
<svg style="left:8px;top:109px;" width="17" height="17" viewBox="0 0 17 17" fill="none"><path d="M1.3 1.7H15.5V3.6L10.2 9.3V14.6L6.6 15.4V9.3L1.3 3.6Z" stroke="#a19f9d" stroke-width="1.1" stroke-linejoin="round"/></svg>
<svg style="left:8.85px;top:375.95px;" width="22" height="22" viewBox="0 0 22 22" fill="none"><path d="M4.35 18.25H0.65V0.65H8.9L13.75 5.1V7.3" stroke="#3b3a39" stroke-width="1.2"/><path d="M8.7 0.65V5.1H13.75" stroke="#3b3a39" stroke-width="1.2"/><path d="M13.75 15.6V18.25H11.0" stroke="#3b3a39" stroke-width="1.2"/><path d="M16.44 6.94L18.56 9.06L9.1 18.02L6.2 18.8L6.98 15.9Z" stroke="#1e8ad6" stroke-width="1.25" fill="#faf9f8" stroke-linejoin="round"/><path d="M15.2 8.2L17.3 10.3" stroke="#1e8ad6" stroke-width="0.9"/></svg>
<svg style="left:81.0px;top:376.25px;" width="20" height="20" viewBox="0 0 20 20" fill="none"><path d="M6.3 16.6H0.65V0.65H8.9L13.4 5.0V6.7" stroke="#323130" stroke-width="1.2" stroke-linejoin="miter"/><path d="M8.7 0.65V5.0H13.4" stroke="#323130" stroke-width="1.2"/><circle cx="12.26" cy="13.4" r="4.85" stroke="#a343b0" stroke-width="1.2" fill="#faf9f8"/><path d="M12.26 12.5V16.1" stroke="#a343b0" stroke-width="1.3"/><circle cx="12.26" cy="10.7" r="0.8" fill="#a343b0"/></svg>
<svg style="left:106.3px;top:380.8px;" width="12" height="10" viewBox="0 0 12 10" fill="none"><path d="M2.5 3.25L6 6.75L9.5 3.25" stroke="#323130" stroke-width="1.35" stroke-linejoin="miter"/></svg>
<svg style="left:131.4px;top:376.25px;" width="20" height="20" viewBox="0 0 20 20" fill="none"><path d="M4.2 6.3V0.7H14.8V6.3" stroke="#323130" stroke-width="1.3"/><path d="M4.2 14.7H0.7V6.3H18.3V14.7H14.8" stroke="#323130" stroke-width="1.3"/><rect x="4.2" y="10.9" width="10.6" height="6.9" fill="#e6e4e2" stroke="#323130" stroke-width="1.3"/><path d="M6.2 13.4H12.8M6.2 15.5H12.8" stroke="#605e5c" stroke-width="0.9"/><rect x="2.4" y="8" width="2.3" height="1.2" fill="#2b88d8"/></svg>
<svg style="left:158.2px;top:380.8px;" width="12" height="10" viewBox="0 0 12 10" fill="none"><path d="M2.5 3.25L6 6.75L9.5 3.25" stroke="#323130" stroke-width="1.35" stroke-linejoin="miter"/></svg>
<svg style="left:1123.8px;top:376.6px;" width="20" height="20" viewBox="0 0 20 20" fill="none"><rect x="0.7" y="7.3" width="4.5" height="11" fill="#a9dcb8" stroke="#1fa84f" stroke-width="1.2"/><rect x="7.3" y="0.7" width="4.1" height="17.6" fill="#fbd78a" stroke="#f08a24" stroke-width="1.2"/><rect x="13.5" y="4.5" width="4.4" height="13.8" fill="#f6b1b0" stroke="#e8433f" stroke-width="1.2"/></svg>
<svg style="left:1146.5px;top:380.9px;" width="12" height="10" viewBox="0 0 12 10" fill="none"><path d="M2.5 3.25L6 6.75L9.5 3.25" stroke="#323130" stroke-width="1.35" stroke-linejoin="miter"/></svg>
<svg style="left:1169.4px;top:376.8px;" width="20" height="20" viewBox="0 0 20 20" fill="none"><rect x="0.7" y="0.7" width="17" height="3.6" fill="#d2d0ce"/><path d="M9 17.3H0.7V0.7H17.7V9" stroke="#323130" stroke-width="1.3"/><path d="M0.7 4.5H17.7" stroke="#323130" stroke-width="1.1"/><circle cx="13.2" cy="12.6" r="3.3" stroke="#323130" stroke-width="1.2"/><path d="M15.6 15L19.2 18.6" stroke="#323130" stroke-width="1.3"/></svg>
<svg style="left:1253.4px;top:377.0px;" width="19.4" height="18.9" viewBox="0 0 20 20" preserveAspectRatio="none" fill="none"><path d="M1.7 8.6A8.4 8.4 0 0 1 17.6 6.2" stroke="#323130" stroke-width="1.3"/><path d="M18.3 11.4A8.4 8.4 0 0 1 2.4 13.8" stroke="#323130" stroke-width="1.3"/><path d="M19.3 0.4V6.9H12.6" stroke="#323130" stroke-width="1.3"/><path d="M0.7 19.6V13.1H7.4" stroke="#323130" stroke-width="1.3"/></svg>
<svg style="left:1289.4px;top:376.5px;" width="20" height="20" viewBox="0 0 20 20" fill="none"><rect x="0.7" y="0.7" width="15.8" height="4" fill="#bdbbb9"/><path d="M8 17.3H0.7V0.7H16.5V8.5" stroke="#323130" stroke-width="1.3"/><path d="M0.7 4.8H16.5" stroke="#323130" stroke-width="1.2"/><path d="M16.44 12.24L18.15 12.89L18.15 14.31L16.44 14.96L15.90 15.90L16.19 17.71L14.96 18.41L13.54 17.26L12.46 17.26L11.04 18.41L9.81 17.71L10.10 15.90L9.56 14.96L7.85 14.31L7.85 12.89L9.56 12.24L10.10 11.30L9.81 9.49L11.04 8.79L12.46 9.94L13.54 9.94L14.96 8.79L16.19 9.49L15.90 11.30ZM11.10 13.60A1.9 1.9 0 1 0 14.90 13.60A1.9 1.9 0 1 0 11.10 13.60Z" fill="#323130" fill-rule="evenodd"/></svg>
<svg style="left:1311.6px;top:380.9px;" width="12" height="10" viewBox="0 0 12 10" fill="none"><path d="M2.5 3.25L6 6.75L9.5 3.25" stroke="#323130" stroke-width="1.35" stroke-linejoin="miter"/></svg>
<svg style="left:1353.3px;top:376.3px;" width="22" height="20" viewBox="0 0 22 20" fill="none"><circle cx="6.5" cy="9.7" r="5.3" stroke="#323130" stroke-width="1.3"/><path d="M10.4 13.6L16 19.2" stroke="#323130" stroke-width="1.3"/><path d="M9.2 1H19.8M11.8 3.4H19.8M14.4 5.8H19.8" stroke="#2b9be0" stroke-width="1.3"/></svg>
<div style="left:1333px;top:396.3px;width:22.5px;height:8.7px;background:#edebe9;border:1px solid #e1dfdd;border-bottom:none;border-radius:2px 2px 0 0;box-sizing:border-box;"></div>
<svg style="left:1338.5px;top:397.5px;" width="12" height="7" viewBox="0 0 12 7" fill="none"><path d="M2 1.5L6 5.3L10 1.5" stroke="#a19f9d" stroke-width="1"/></svg>
<svg style="left:46px;top:6px;" width="20" height="18" viewBox="0 0 20 18" fill="none"><path d="M1.7 4.1H17.5M1.7 8.6H17.5M1.7 13.1H17.5" stroke="#fff" stroke-width="1.3"/></svg>
<svg style="left:80px;top:4px;" width="22" height="22" viewBox="0 0 22 22" fill="none"><circle cx="8.7" cy="8.1" r="4.6" stroke="#fff" stroke-width="1.3"/><path d="M12 11.5L18.6 17.6" stroke="#fff" stroke-width="1.3"/></svg>
<svg style="left:118px;top:5px;" width="24" height="20" viewBox="0 0 24 20" fill="none"><path d="M4.3 4.2H2.6V16H19.5" stroke="#fff" stroke-width="1"/><rect x="4.3" y="2.6" width="15.8" height="13.4" stroke="#fff" stroke-width="1.1"/><rect x="7.5" y="5.4" width="4.6" height="4.6" stroke="#fff" stroke-width="1.3"/><path d="M13.7 5.4H17.6M13.7 7.7H17.6M13.7 10H17.6M7 12.8H17.6" stroke="#fff" stroke-width="1.2"/></svg>
<svg style="left:1125px;top:9px;" width="12" height="10" viewBox="0 0 12 10" fill="none"><path d="M2.2 3.2L5.9 6.8L9.6 3.2" stroke="#fff" stroke-width="2"/></svg>
<svg style="left:1160px;top:5px;" width="16" height="20" viewBox="0 0 16 20" fill="none"><circle cx="7.5" cy="5.6" r="2.6" stroke="#fff" stroke-width="1.2"/><path d="M2.2 16.6C2.2 13 4.2 10 7.5 10C10.8 10 12.8 13 12.8 16.6Z" stroke="#fff" stroke-width="1.2" stroke-linejoin="round"/></svg>
<svg style="left:1189px;top:5px;" width="20" height="18" viewBox="0 0 20 18" fill="none"><path d="M2.6 2.6H16.6V13.4H9L5.4 16.2V13.4H2.6Z" stroke="#fff" stroke-width="1.2" stroke-linejoin="round"/><path d="M5.6 6H13.6M5.6 8.6H13.6" stroke="#fff" stroke-width="1.1"/></svg>
<svg style="left:1221px;top:5px;" width="16" height="20" viewBox="0 0 16 20" fill="none"><path d="M3.2 14.4V8.2C3.2 5 5.3 2.6 8.1 2.6C10.9 2.6 13 5 13 8.2V14.4" stroke="#fff" stroke-width="1.2"/><path d="M1.9 14.4H14.3" stroke="#fff" stroke-width="1.2"/><path d="M7.1 16.8H9.1" stroke="#fff" stroke-width="1.3"/></svg>
<svg style="left:1252px;top:6.5px;" width="18" height="18" viewBox="0 0 18 18" fill="none"><circle cx="8.7" cy="8.8" r="6.7" stroke="#fff" stroke-width="1.1"/></svg>
<span style="left:1257.49px;top:9.99px;font-size:11px;color:#fff;">?</span>
<div style="left:1284px;top:6px;width:1px;height:18px;background:#4dbfe9;"></div>
<div style="left:1303px;top:17px;width:11px;height:1.3px;background:#fff;"></div>
<svg style="left:1332px;top:8px;" width="15" height="13" viewBox="0 0 15 13" fill="none"><path d="M4.7 3.8V1.9H12.5V8.9H10.6" stroke="#fff" stroke-width="1.2"/><rect x="2.5" y="3.8" width="8.1" height="7.4" stroke="#fff" stroke-width="1.2"/></svg>
<svg style="left:1365px;top:10px;" width="13" height="12" viewBox="0 0 13 12" fill="none"><path d="M1.9 1.5L11 10.1M11 1.5L1.9 10.1" stroke="#fff" stroke-width="1.3"/></svg>
<svg style="left:2.4px;top:318.3px;" width="10" height="10" viewBox="0 0 10 10" fill="none"><path d="M7 1.2L1.9 5L7 8.8" stroke="#dcdbda" stroke-width="1.3"/></svg>
<svg style="left:1373px;top:318.3px;" width="10" height="10" viewBox="0 0 10 10" fill="none"><path d="M3.2 1.2L8.3 5L3.2 8.8" stroke="#dcdbda" stroke-width="1.3"/></svg>
<svg style="left:2.4px;top:737.2px;" width="10" height="10" viewBox="0 0 10 10" fill="none"><path d="M7 1.2L1.9 5L7 8.8" stroke="#dcdbda" stroke-width="1.3"/></svg>
<svg style="left:1373px;top:737.2px;" width="10" height="10" viewBox="0 0 10 10" fill="none"><path d="M3.2 1.2L8.3 5L3.2 8.8" stroke="#dcdbda" stroke-width="1.3"/></svg>
<svg style="left:1371px;top:152px;" width="12" height="16" viewBox="0 0 12 16" fill="none"><path d="M9 2L3.2 8L9 14" stroke="#a19f9d" stroke-width="1.1"/></svg>
<svg style="left:1371px;top:431px;" width="12" height="16" viewBox="0 0 12 16" fill="none"><path d="M9 2L3.2 8L9 14" stroke="#a19f9d" stroke-width="1.1"/></svg>
<svg style="left:182.35px;top:165px;" width="14" height="16" viewBox="0 0 14 16" fill="none"><path d="M5 1.7V10.2M1.4 6.6L5 10.2L8.6 6.6" stroke="#55534f" stroke-width="1.1"/></svg>
<span style="left:190.93px;top:171.56px;font-size:9.5px;color:#323130;">1</span>
<svg style="left:228.35px;top:165px;" width="14" height="16" viewBox="0 0 14 16" fill="none"><path d="M5 1.7V10.2M1.4 6.6L5 10.2L8.6 6.6" stroke="#55534f" stroke-width="1.1"/></svg>
<span style="left:236.43px;top:171.56px;font-size:9.5px;color:#323130;">2</span>
<svg style="left:274.5px;top:165px;" width="14" height="16" viewBox="0 0 14 16" fill="none"><path d="M5 1.7V10.2M1.4 6.6L5 10.2L8.6 6.6" stroke="#55534f" stroke-width="1.1"/></svg>
<span style="left:282.58px;top:171.56px;font-size:9.5px;color:#323130;">3</span>
<svg style="left:545.6px;top:186.6px;" width="18" height="20" viewBox="0 0 18 20" fill="none"><path d="M1.2 0.9H10L15 5.8V18.2H1.2Z" fill="#fff" stroke="#5d5c5a" stroke-width="1"/><path d="M10 0.9V5.8H15" stroke="#5d5c5a" stroke-width="0.9" fill="#e8e8e8"/><path d="M15.6 6.5V18.8H2" stroke="#b5b3b1" stroke-width="0.8"/><path d="M4.4 5.4H7M3.6 7.6H11" stroke="#8a99ad" stroke-width="0.8"/><rect x="3" y="9.7" width="10" height="6.2" fill="#2f6bb3"/><rect x="4" y="12.8" width="3.5" height="2.2" fill="#fff"/><rect x="8.5" y="12.8" width="3.5" height="2.2" fill="#fff"/></svg>
<svg style="left:545.6px;top:210.6px;" width="18" height="20" viewBox="0 0 18 20" fill="none"><path d="M1.2 0.9H10L15 5.8V18.2H1.2Z" fill="#fff" stroke="#5d5c5a" stroke-width="1"/><path d="M10 0.9V5.8H15" stroke="#5d5c5a" stroke-width="0.9" fill="#e8e8e8"/><path d="M15.6 6.5V18.8H2" stroke="#b5b3b1" stroke-width="0.8"/><path d="M4.4 5.4H7M3.6 7.6H11" stroke="#8a99ad" stroke-width="0.8"/><rect x="3" y="9.7" width="10" height="6.2" fill="#2f6bb3"/><rect x="4" y="12.8" width="3.5" height="2.2" fill="#fff"/><rect x="8.5" y="12.8" width="3.5" height="2.2" fill="#fff"/></svg>
</div></body></html>
